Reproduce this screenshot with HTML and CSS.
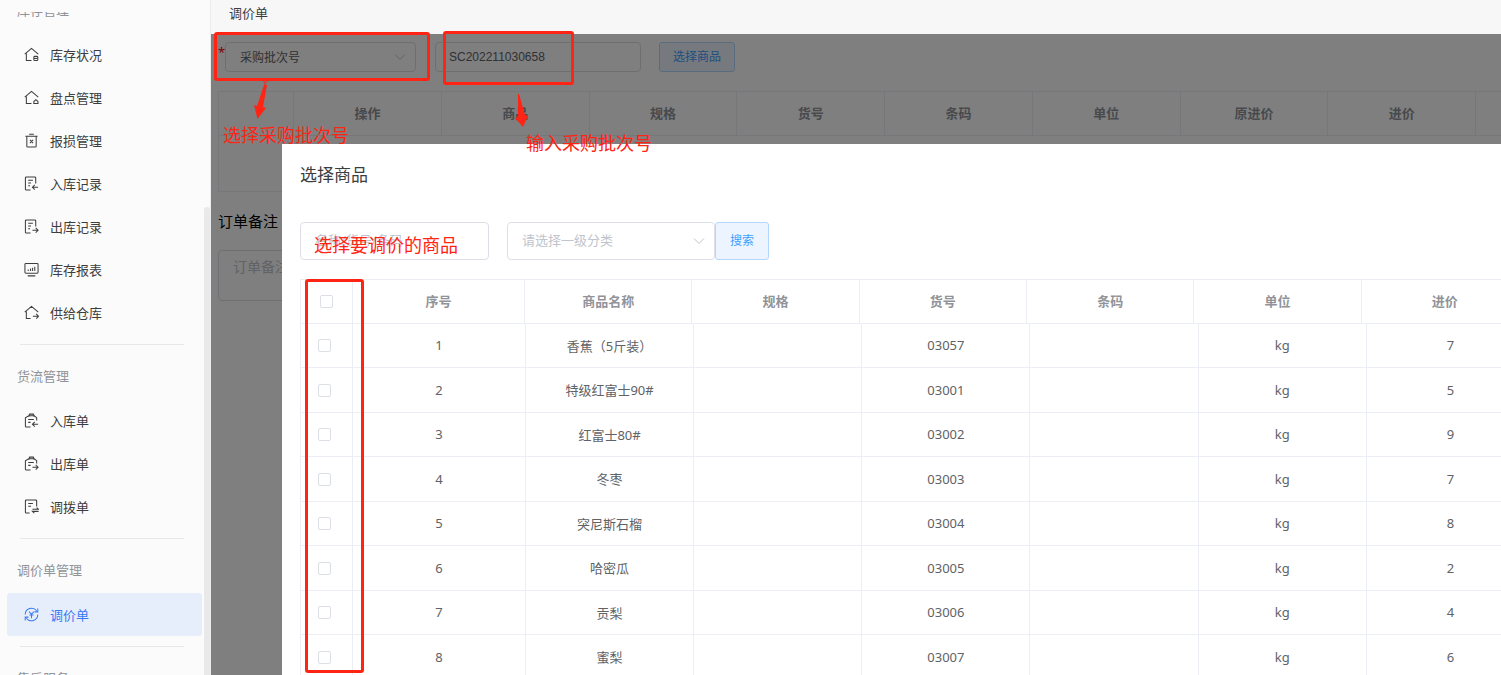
FILE: index.html
```
<!DOCTYPE html>
<html lang="zh-CN">
<head>
  <meta charset="UTF-8" />
  <meta name="viewport" content="width=device-width, initial-scale=1.0"/>
  <title>调价单</title>
  <link rel="stylesheet" href="styles.css">
</head>
<body>

  <!-- Sidebar -->
  <aside class="sidebar">
    <nav class="menu">
      <div class="group">
        <h3>库存管理</h3>
        <a href="#"><svg viewBox="0 0 16 16"><path d="M2.5 7v7.3H8M.8 7.6 8 1.5l7.2 6.1"/><rect x="10.5" y="10" width="4.2" height="4.5" rx="1"/><path d="M10.5 12.2h4"/></svg>库存状况</a>
        <a href="#"><svg viewBox="0 0 16 16"><path d="M2.5 7v7.3H8M.8 7.6 8 1.5l7.2 6.1"/><path d="M10.5 14.5v-2.2l2.2-2 2.2 2v2.2z"/></svg>盘点管理</a>
        <a href="#"><svg viewBox="0 0 16 16"><path d="M1.5 3.5h13M5.5 1.3h5M3 3.5V14a1 1 0 0 0 1 1h8a1 1 0 0 0 1-1V3.5M6.3 7.3l3.4 3.4M9.7 7.3l-3.4 3.4"/></svg>报损管理</a>
        <a href="#"><svg viewBox="0 0 16 16"><path d="M12.5 8V2a1 1 0 0 0-1-1h-9a1 1 0 0 0-1 1v12a1 1 0 0 0 1 1H7M4.5 4.5h5M4.5 7.5h3M4.5 10.5h2M15 12H9M11.5 9.5 9 12l2.5 2.5"/></svg>入库记录</a>
        <a href="#"><svg viewBox="0 0 16 16"><path d="M12.5 8V2a1 1 0 0 0-1-1h-9a1 1 0 0 0-1 1v12a1 1 0 0 0 1 1H7M4.5 4.5h5M4.5 7.5h3M4.5 10.5h2M9 12h6M12.5 9.5 15 12l-2.5 2.5"/></svg>出库记录</a>
        <a href="#"><svg viewBox="0 0 16 16"><rect x="1" y="1.5" width="14" height="10.5" rx="1"/><path d="M4.5 9.5V8M7 9.5V7M9.2 9.5V6M11.5 9.5V5M4 14.8h8"/></svg>库存报表</a>
        <a href="#"><svg viewBox="0 0 16 16"><path d="M2.5 7v7.3H7M.8 7.6 8 1.5l7.2 6.1M9.5 12h6M13 9.5l2.5 2.5-2.5 2.5"/></svg>供给仓库</a>
      </div>
      <div class="group">
        <h3>货流管理</h3>
        <a href="#"><svg viewBox="0 0 16 16"><path d="M13.5 8V5L11 3H5L1.5 5v9a1 1 0 0 0 1 1H7M5 4l1-2.8h4L11 4M4.5 7h6M4.5 10H7M15 12H9M11.5 9.5 9 12l2.5 2.5"/></svg>入库单</a>
        <a href="#"><svg viewBox="0 0 16 16"><path d="M13.5 8V5L11 3H5L1.5 5v9a1 1 0 0 0 1 1H7M5 4l1-2.8h4L11 4M4.5 7h6M4.5 10H7M9 12h6M12.5 9.5 15 12l-2.5 2.5"/></svg>出库单</a>
        <a href="#"><svg viewBox="0 0 16 16"><path d="M13.5 8V2a1 1 0 0 0-1-1h-10a1 1 0 0 0-1 1v12a1 1 0 0 0 1 1H6M4.5 4.8h5M4.5 7.8h3M9 11h6.5l-2-1.8M15.5 13.2H9l2 1.8"/></svg>调拨单</a>
      </div>
      <div class="group">
        <h3>调价单管理</h3>
        <a href="#" class="active"><svg viewBox="0 0 16 16"><path d="M1.3 8A6.8 6.8 0 0 1 13.5 4M14.7 1.5v3.7h-3.5M14.7 8A6.8 6.8 0 0 1 2.5 12M1.3 14.5v-3.7h3.5M5.5 5 8 7.8 10.5 5M8 7.8V12M5.8 8.500h4.4"/></svg>调价单</a>
      </div>
      <div class="group">
        <h3>售后服务</h3>
      </div>
    </nav>
    <div class="scroll-thumb"></div>
  </aside>

  <main class="main">
    <header class="tab-bar">调价单</header>

    <div class="content">
      <!-- Page behind the dialog -->
      <form class="batch-form">
        <span class="required">*</span>
        <div class="select-box batch-type">
          <select aria-label="批次类型"><option>采购批次号</option></select>
          <svg viewBox="0 0 12 12"><path d="M1 3.5l5 5 5-5"/></svg>
        </div>
        <input class="batch-no" type="text" value="SC202211030658" aria-label="采购批次号">
        <button type="button" class="btn btn-small">选择商品</button>
      </form>

      <div class="order-wrap">
        <table class="order-table">
          <thead>
            <tr><th class="narrow"></th><th>操作</th><th>商品</th><th>规格</th><th>货号</th><th>条码</th><th>单位</th><th>原进价</th><th>进价</th><th></th></tr>
          </thead>
          <tbody>
            <tr><td colspan="10"></td></tr>
          </tbody>
        </table>
      </div>

      <label class="remark-label" for="remark">订单备注</label>
      <textarea class="remark" id="remark" placeholder="订单备注"></textarea>

      <!-- Dialog -->
      <div class="overlay">
        <section class="dialog">
          <h2>选择商品</h2>
          <form class="search-form">
            <input type="text" placeholder="名称/货号/条码" aria-label="名称/货号/条码">
            <div class="select-box category">
              <select aria-label="一级分类"><option>请选择一级分类</option></select>
              <svg viewBox="0 0 12 12"><path d="M1 3.5l5 5 5-5"/></svg>
            </div>
            <button type="button" class="btn">搜索</button>
          </form>

          <table class="goods goods-head">
            <thead>
              <tr><th class="check"><input type="checkbox" aria-label="全选"></th><th class="index">序号</th><th>商品名称</th><th>规格</th><th>货号</th><th>条码</th><th>单位</th><th>进价</th></tr>
            </thead>
          </table>
          <table class="goods goods-body">
            <tbody>
              <tr><td class="check"><input type="checkbox" aria-label="选择 1"></td><td class="index">1</td><td>香蕉（5斤装）</td><td></td><td>03057</td><td></td><td>kg</td><td>7</td></tr>
              <tr><td class="check"><input type="checkbox" aria-label="选择 2"></td><td class="index">2</td><td>特级红富士90#</td><td></td><td>03001</td><td></td><td>kg</td><td>5</td></tr>
              <tr><td class="check"><input type="checkbox" aria-label="选择 3"></td><td class="index">3</td><td>红富士80#</td><td></td><td>03002</td><td></td><td>kg</td><td>9</td></tr>
              <tr><td class="check"><input type="checkbox" aria-label="选择 4"></td><td class="index">4</td><td>冬枣</td><td></td><td>03003</td><td></td><td>kg</td><td>7</td></tr>
              <tr><td class="check"><input type="checkbox" aria-label="选择 5"></td><td class="index">5</td><td>突尼斯石榴</td><td></td><td>03004</td><td></td><td>kg</td><td>8</td></tr>
              <tr><td class="check"><input type="checkbox" aria-label="选择 6"></td><td class="index">6</td><td>哈密瓜</td><td></td><td>03005</td><td></td><td>kg</td><td>2</td></tr>
              <tr><td class="check"><input type="checkbox" aria-label="选择 7"></td><td class="index">7</td><td>贡梨</td><td></td><td>03006</td><td></td><td>kg</td><td>4</td></tr>
              <tr><td class="check"><input type="checkbox" aria-label="选择 8"></td><td class="index">8</td><td>蜜梨</td><td></td><td>03007</td><td></td><td>kg</td><td>6</td></tr>
            </tbody>
          </table>
        </section>
      </div>
    </div>
  </main>

  <!-- Red guide marks -->
  <div class="mark mark-type"></div>
  <div class="mark mark-no"></div>
  <div class="mark mark-check"></div>
  <svg class="arrow arrow-type" viewBox="0 0 16 42"><path d="M11 8 14 8 10 30 13 31 4.500 42 1 28 4 29z"/><path class="fork" d="M8 1l4 5 4-3M12 6v6"/></svg>
  <svg class="arrow arrow-no" viewBox="0 0 14 34"><path d="M3 0 4 0 10 21 13 22 8 33 0 24 3 23z"/></svg>
  <p class="note note-type">选择采购批次号</p>
  <p class="note note-no">输入采购批次号</p>
  <p class="note note-goods">选择要调价的商品</p>

</body>
</html>
```
FILE: styles.css
```
* {
  box-sizing: border-box;
}
body {
  margin: 0;
  height: 100vh;
  display: flex;
  position: relative;
  overflow: hidden;
  background: #fff;
  color: #606266;
  font-family: "Noto Sans", "Noto Sans CJK SC", sans-serif;
  font-size: 13px;
}
input, select, textarea, button {
  font: inherit;
  color: inherit;
  margin: 0;
}

/* Sidebar */
.sidebar {
  position: relative;
  flex: 0 0 211px;
  padding: 12px 8px 0 7px;
  background: #fbfbfb;
  border-right: 1px solid #ececec;
}
.menu {
  height: 100%;
  overflow: hidden;
}
.group:first-child {
  margin-top: -23px;
}
.group + .group {
  margin-top: 10px;
}
.group + .group::before {
  content: "";
  display: block;
  height: 1px;
  margin: 0 18px 10px 13px;
  background: #e8e8e8;
}
.group h3 {
  margin: 0;
  padding: 0 0 2px 10px;
  font-size: 13px;
  font-weight: normal;
  line-height: 42px;
  color: #909399;
}
.group a {
  display: flex;
  align-items: center;
  gap: 11px;
  height: 43px;
  padding: 0 0 1px 17px;
  border-radius: 3px;
  color: #3c3d40;
  text-decoration: none;
}
.group a svg {
  width: 15px;
  height: 15px;
  fill: none;
  stroke: currentColor;
  stroke-width: 1.1;
}
.group a.active {
  background: #e6eefb;
  color: #3b78f5;
}
.scroll-thumb {
  position: absolute;
  top: 207px;
  right: 0;
  bottom: 0;
  width: 6px;
  border-radius: 3px 3px 0 0;
  background: #e9e9eb;
}

/* Main */
.main {
  flex: 1;
  min-width: 0;
  display: flex;
  flex-direction: column;
}
.tab-bar {
  flex: 0 0 34px;
  padding-left: 18px;
  line-height: 26px;
  background: #f7f7f7;
  color: #3c3d40;
}
.content {
  position: relative;
  flex: 1;
  min-height: 0;
  padding: 8px 0 0 7px;
  overflow: hidden;
}
.batch-form {
  display: flex;
  height: 30px;
  font-size: 12px;
}
.required {
  width: 7px;
  font-size: 13px;
  line-height: 20px;
  color: #f00;
}
.select-box {
  position: relative;
}
.select-box select {
  width: 100%;
  height: 100%;
  padding: 0 14px;
  border: 1px solid #dcdfe6;
  border-radius: 4px;
  background: #fff;
  appearance: none;
}
.select-box svg {
  position: absolute;
  top: 50%;
  right: 10px;
  width: 12px;
  height: 12px;
  margin-top: -6px;
  fill: none;
  stroke: #c0c4cc;
}
.batch-type {
  width: 191px;
}
.batch-no {
  width: 206px;
  margin-left: 19px;
  padding: 0 13px;
  border: 1px solid #dcdfe6;
  border-radius: 4px;
  font-family: "Liberation Sans", sans-serif;
}
.btn {
  width: 54px;
  padding: 0 0 2px;
  border: 1px solid #b3d8ff;
  border-radius: 3px;
  background: #ecf5ff;
  color: #409eff;
  font-size: 12px;
}
.btn-small {
  width: 76px;
  margin-left: 18px;
}
.order-wrap {
  margin-top: 19px;
  overflow: hidden;
}
.order-table {
  width: 1406px;
  table-layout: fixed;
  border-collapse: collapse;
}
.order-table th {
  height: 44px;
  padding: 0 0 2px;
  border: 1px solid #ebeef5;
  color: #909399;
}
.order-table .narrow {
  width: 75px;
}
.order-table td {
  height: 56px;
  border: 1px solid #ebeef5;
}
.remark-label {
  display: block;
  margin-top: 17px;
  font-size: 15px;
  line-height: 24px;
  color: #000;
}
.remark {
  display: block;
  width: 600px;
  height: 51px;
  margin-top: 17px;
  padding: 5px 14px;
  border: 1px solid #dcdfe6;
  border-radius: 4px;
  font-size: 14px;
  resize: none;
}
::placeholder {
  color: #c0c4cc;
}

/* Dialog */
.overlay {
  position: absolute;
  inset: 0;
  padding: 110px 0 0 71px;
  background: rgba(0, 0, 0, 0.5);
}
.dialog {
  height: 100%;
  padding: 18px 0 0 18px;
  overflow: hidden;
  background: #fff;
}
.dialog h2 {
  margin: 0;
  font-size: 17px;
  font-weight: normal;
  line-height: 26px;
  color: #3c3d40;
}
.search-form {
  display: flex;
  height: 38px;
  margin-top: 34px;
}
.search-form > input {
  width: 189px;
  padding: 0 14px 2px;
  border: 1px solid #dcdfe6;
  border-radius: 4px;
}
.category {
  width: 208px;
  margin-left: 18px;
  color: #c0c4cc;
}
.category select {
  padding-bottom: 2px;
}
.goods {
  table-layout: fixed;
  border-collapse: separate;
  border-spacing: 0;
  border-left: 1px solid #ebeef5;
}
.goods-head {
  width: 1229px;
  margin-top: 19px;
  border-top: 1px solid #ebeef5;
}
.goods-body {
  width: 1235px;
}
.goods th, .goods td {
  height: 44px;
  padding: 0 0 1px;
  border-right: 1px solid #ebeef5;
  border-bottom: 1px solid #ebeef5;
  text-align: center;
}
.goods tr:nth-child(even) td {
  height: 45px;
}
.goods th {
  padding-bottom: 2px;
  color: #909399;
}
.goods .check {
  width: 52px;
  padding-bottom: 0;
}
.goods td.check {
  padding-right: 4px;
}
.goods .index {
  width: 172px;
}
.goods-body .index {
  width: 173px;
}
.goods input {
  display: block;
  width: 13px;
  height: 13px;
  margin: 0 auto;
  border: 1px solid #dcdfe6;
  border-radius: 2px;
  background: #fff;
  appearance: none;
}

/* Guide marks */
.mark {
  position: absolute;
  border: 3px solid #ff2414;
  border-radius: 3px;
}
.mark-type {
  left: 214px;
  top: 32px;
  width: 216px;
  height: 49px;
}
.mark-no {
  left: 443px;
  top: 31px;
  width: 131px;
  height: 54px;
}
.mark-check {
  left: 305px;
  top: 279px;
  width: 59px;
  height: 394px;
}
.arrow {
  position: absolute;
  fill: #ff2414;
}
.arrow-type {
  left: 253px;
  top: 77px;
  width: 16px;
  height: 42px;
}
.arrow-no {
  left: 515px;
  top: 94px;
  width: 14px;
  height: 34px;
}
.arrow .fork {
  fill: none;
  stroke: #ff2414;
}
.note {
  position: absolute;
  margin: 0;
  font-size: 18px;
  line-height: 24px;
  color: #ff2414;
}
.note-type {
  left: 223px;
  top: 123px;
}
.note-no {
  left: 526px;
  top: 131px;
}
.note-goods {
  left: 314px;
  top: 233px;
}
```
